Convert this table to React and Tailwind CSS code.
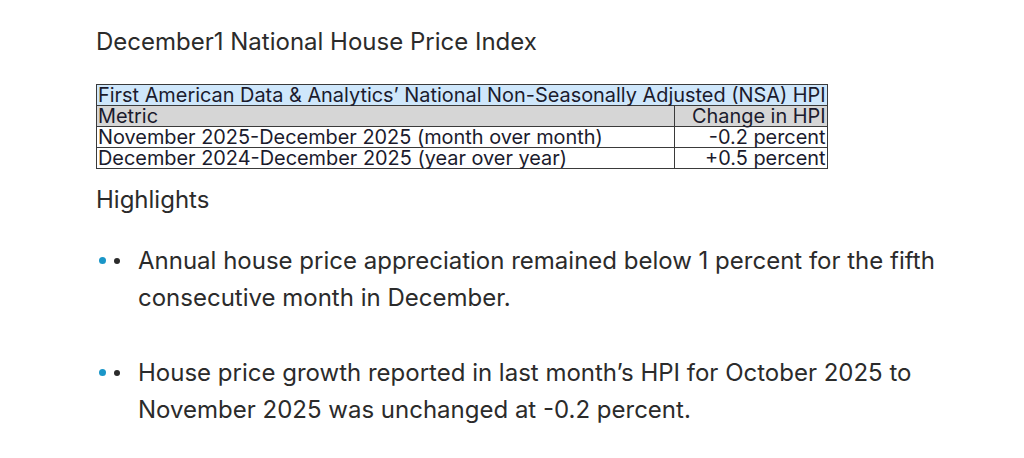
import React from "react";

const rows = [
  { metric: "November 2025-December 2025 (month over month)", change: "-0.2 percent" },
  { metric: "December 2024-December 2025 (year over year)", change: "+0.5 percent" },
];

const highlights = [
  "Annual house price appreciation remained below 1 percent for the fifth consecutive month in December.",
  "House price growth reported in last month\u2019s HPI for October 2025 to November 2025 was unchanged at -0.2 percent.",
];

function Bullet({ text }) {
  return (
    <li className="flex items-start">
      <div className="flex items-center gap-[8px] w-[42px] h-[37px] pl-[3px] shrink-0">
        <span className="block w-[7px] h-[7px] rounded-full bg-[#1a96c8]" />
        <span className="block w-[6px] h-[6px] rounded-full bg-[#2b2b2b]" />
      </div>
      <p className="w-[840px] text-[24px] leading-[37px] text-[#2b2b2b]">{text}</p>
    </li>
  );
}

export default function App() {
  return (
    <div
      className="w-[1024px] h-[458px] bg-white pl-[96px] pt-[27px] overflow-hidden"
      style={{ fontFamily: "Inter, 'Noto Sans', sans-serif" }}
    >
      <h1 className="text-[24px] leading-[30px] text-[#2b2b2b]">
        December1 National House Price Index
      </h1>

      <table className="mt-[27px] w-[731px] border-collapse border border-[#3a3a3a] text-[19.9px] leading-[20px] text-[#1b1b2d]">
        <tbody>
          <tr className="bg-[#cfe7fb]">
            <td colSpan={2} className="border border-[#3a3a3a] px-[1px] whitespace-nowrap">
              First American Data &amp; Analytics&rsquo; National Non-Seasonally Adjusted (NSA) HPI
            </td>
          </tr>
          <tr className="bg-[#d6d6d6]">
            <td className="border border-[#3a3a3a] px-[1px]">Metric</td>
            <td className="border border-[#3a3a3a] px-[1px] text-right">Change in HPI</td>
          </tr>
          {rows.map((r) => (
            <tr key={r.metric}>
              <td className="border border-[#3a3a3a] px-[1px] whitespace-nowrap">{r.metric}</td>
              <td className="border border-[#3a3a3a] px-[1px] text-right w-[153px]">{r.change}</td>
            </tr>
          ))}
        </tbody>
      </table>

      <h2 className="mt-[16px] text-[24px] leading-[30px] text-[#2b2b2b]">Highlights</h2>

      <ul className="mt-[27px] flex flex-col gap-[38px]">
        {highlights.map((h) => (
          <Bullet key={h} text={h} />
        ))}
      </ul>
    </div>
  );
}
